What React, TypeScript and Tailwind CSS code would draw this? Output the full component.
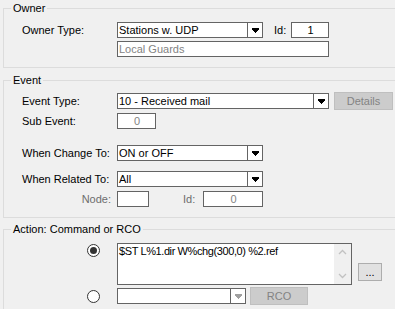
import React from "react";

function Arrow({ disabled }: { disabled?: boolean }) {
  const c = disabled ? "#a0a0a0" : "#000000";
  return (
    <svg width="7" height="5" viewBox="0 0 7 5" shapeRendering="crispEdges">
      <rect x="0" y="0" width="7" height="2" fill={c} />
      <rect x="1" y="2" width="5" height="1" fill={c} />
      <rect x="2" y="3" width="3" height="1" fill={c} />
      <rect x="3" y="4" width="1" height="1" fill={c} />
    </svg>
  );
}

function Combo({ w, text, disabled }: { w: string; text: string; disabled?: boolean }) {
  return (
    <div className={`flex h-[16px] border border-[#646464] bg-white ${w}`}>
      <div className="flex-1 pl-[1px] leading-[14px] whitespace-nowrap overflow-hidden">{text}</div>
      <div className="flex w-[15px] items-center justify-center border-l border-[#646464] bg-white">
        <Arrow disabled={disabled} />
      </div>
    </div>
  );
}

function Box({ w, text, gray, center }: { w: string; text?: string; gray?: boolean; center?: boolean }) {
  return (
    <div
      className={`h-[16px] border border-[#646464] bg-white pl-[1px] leading-[14px] whitespace-nowrap ${w} ${
        gray ? "text-[#838383]" : "text-black"
      } ${center ? "text-center pl-0" : ""}`}
    >
      {text}
    </div>
  );
}

function Group({ title, h, children, mt }: { title: string; h: string; children: React.ReactNode; mt: string }) {
  return (
    <div className={`relative w-[420px] border border-[#dcdcdc] ${h} ${mt}`}>
      <div className="absolute -top-[7px] left-[7px] bg-[#f0f0f0] px-[2px] leading-[13px] whitespace-nowrap">
        {title}
      </div>
      {children}
    </div>
  );
}

function Label({ children, gray, right }: { children: React.ReactNode; gray?: boolean; right?: boolean }) {
  return (
    <div
      className={`w-[95px] shrink-0 leading-[16px] whitespace-nowrap ${gray ? "text-[#6d6d6d]" : "text-black"} ${
        right ? "pr-[6px] text-right" : ""
      }`}
    >
      {children}
    </div>
  );
}

function Radio({ checked }: { checked?: boolean }) {
  return (
    <div className="flex h-[13px] w-[13px] items-center justify-center rounded-full border border-[#333333] bg-white">
      {checked && <div className="h-[7px] w-[7px] rounded-full bg-[#333333]" />}
    </div>
  );
}

function GrayButton({ w, text }: { w: string; text: string }) {
  return (
    <div
      className={`flex h-[18px] items-center justify-center border border-[#bfbfbf] bg-[#cccccc] text-[#838383] ${w}`}
    >
      {text}
    </div>
  );
}

export default function App() {
  return (
    <div className="h-[309px] w-[395px] overflow-hidden bg-[#f0f0f0] pl-[3px] pt-[8px] font-['Liberation_Sans',Arial,sans-serif] text-[11px] text-black">
      <Group title="Owner" h="h-[60px]" mt="mt-0">
        <div className="flex flex-col pl-[18px] pt-[13px]">
          <div className="flex items-center">
            <Label>Owner Type:</Label>
            <Combo w="w-[146px]" text="Stations w. UDP" />
            <div className="ml-[11px] w-[17px] leading-[16px]">Id:</div>
            <Box w="w-[38px]" text="1" center />
          </div>
          <div className="mt-[3px] flex items-center">
            <div className="w-[95px] shrink-0" />
            <Box w="w-[212px]" text="Local Guards" gray />
          </div>
        </div>
      </Group>

      <Group title="Event" h="h-[138px]" mt="mt-[12px]">
        <div className="flex flex-col pl-[18px] pt-[11px]">
          <div className="flex h-[18px] items-center">
            <Label>Event Type:</Label>
            <Combo w="w-[212px]" text="10 - Received mail" />
            <div className="ml-[5px]">
              <GrayButton w="w-[59px]" text="Details" />
            </div>
          </div>
          <div className="mt-[3px] flex items-center">
            <Label>Sub Event:</Label>
            <Box w="w-[39px]" text="0" gray center />
          </div>
          <div className="mt-[16px] flex items-center">
            <Label>When Change To:</Label>
            <Combo w="w-[146px]" text="ON or OFF" />
          </div>
          <div className="mt-[10px] flex items-center">
            <Label>When Related To:</Label>
            <Combo w="w-[146px]" text="All" />
          </div>
          <div className="mt-[4px] flex items-center">
            <Label gray right>
              Node:
            </Label>
            <Box w="w-[32px]" />
            <div className="ml-[34px] w-[20px] leading-[16px] text-[#6d6d6d]">Id:</div>
            <Box w="w-[60px]" text="0" gray center />
          </div>
        </div>
      </Group>

      <Group title="Action: Command or RCO" h="h-[100px]" mt="mt-[11px]">
        <div className="flex flex-col pl-[18px] pt-[13px]">
          <div className="flex items-start">
            <div className="flex w-[95px] shrink-0 justify-end pr-[17px] pt-[1px]">
              <Radio checked />
            </div>
            <div className="flex h-[42px] w-[235px] border border-[#646464] bg-white">
              <div className="flex-1 pl-[1px] pt-[1px] leading-[13px] tracking-[-0.4px] whitespace-nowrap">
                $ST L%1.dir W%chg(300,0) %2.ref
              </div>
              <div className="flex w-[17px] flex-col items-center justify-between bg-[#f0f0f0] py-[5px]">
                <svg width="9" height="6" viewBox="0 0 9 6">
                  <path d="M1 5 L4.5 1.5 L8 5" fill="none" stroke="#c2c2c2" strokeWidth="1.3" />
                </svg>
                <svg width="9" height="6" viewBox="0 0 9 6">
                  <path d="M1 1 L4.5 4.5 L8 1" fill="none" stroke="#c2c2c2" strokeWidth="1.3" />
                </svg>
              </div>
            </div>
            <div className="ml-[6px] mt-[20px] flex h-[18px] w-[24px] items-center justify-center border border-[#adadad] bg-[#e1e1e1] leading-[10px]">
              ...
            </div>
          </div>
          <div className="mt-[2px] flex h-[18px] items-center">
            <div className="flex w-[95px] shrink-0 justify-end pr-[17px]">
              <Radio />
            </div>
            <Combo w="w-[129px]" text="" disabled />
            <div className="ml-[4px]">
              <GrayButton w="w-[58px]" text="RCO" />
            </div>
          </div>
        </div>
      </Group>
    </div>
  );
}
